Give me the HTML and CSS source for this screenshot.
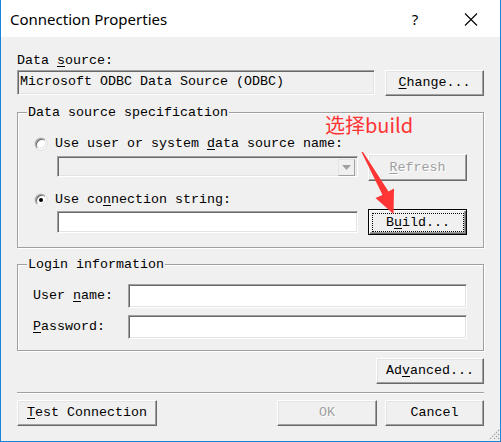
FILE: index.html
```html
<!DOCTYPE html>
<html>
<head>
<meta charset="utf-8">
<link rel="stylesheet" href="styles.css">
</head>
<body>
<div class="window">
  <div class="titlebar">
    <span class="title">Connection Properties</span>
    <span class="help">?</span>
    <span class="close"><svg width="28" height="37" viewBox="0 0 28 37"><path d="M8 13.5 L20 25.5 M20 13.5 L8 25.5" stroke="#000" stroke-width="1.1" fill="none"/></svg></span>
  </div>
  <div class="content">
    <div class="label">Data <u>s</u>ource:</div>
    <div class="ds-row">
      <div class="textbox readonly ds-box">Microsoft ODBC Data Source (ODBC)</div>
      <button class="btn w99"><u>C</u>hange...</button>
    </div>

    <div class="group spec">
      <div class="group-title">Data source specification</div>
      <div class="radio-row r1"><span class="radio"></span><span>Use user or system <u>d</u>ata source name:</span></div>
      <div class="ctrl-row c1">
        <div class="combo"><span class="combo-btn"><svg width="9" height="5" viewBox="0 0 9 5"><path d="M0 0 H9 L4.5 5 Z" fill="#a0a0a0"/></svg></span></div>
        <button class="btn w99 disabled refresh"><u>R</u>efresh</button>
      </div>
      <div class="radio-row r2"><span class="radio checked"></span><span>Use co<u>n</u>nection string:</span></div>
      <div class="ctrl-row c2">
        <div class="textbox cs-box"></div>
        <button class="btn w99 default"><span class="focus">B<u>u</u>ild...</span></button>
      </div>
    </div>

    <div class="group login">
      <div class="group-title">Login information</div>
      <div class="login-grid">
        <span class="llabel">User <u>n</u>ame:</span>
        <div class="textbox login-box"></div>
        <span class="llabel"><u>P</u>assword:</span>
        <div class="textbox login-box"></div>
      </div>
    </div>

    <button class="btn advanced">Ad<u>v</u>anced...</button>
    <div class="separator"></div>
    <div class="bottom-row">
      <button class="btn test"><u>T</u>est Connection</button>
      <button class="btn w100 disabled ok">OK</button>
      <button class="btn w99">Cancel</button>
    </div>
  </div>

  <div class="annotation">选择build</div>
  <svg class="arrow" width="40" height="66" viewBox="360 151 40 66"><polygon points="361.5,152 363,152 388.5,191.5 394,188.5 393.5,214 375.5,198 382.5,195" fill="#ff3434"/></svg>
  <svg class="grip" width="12" height="12" viewBox="0 0 12 12">
    <path d="M11 1 L1 11 M11 5 L5 11 M11 9 L9 11" stroke="#a0a0a0" stroke-width="1.2" stroke-dasharray="1.4 1.4" fill="none"/>
  </svg>
</div>
</body>
</html>
```
FILE: styles.css
```css
* { box-sizing: border-box; }
html, body { margin: 0; padding: 0; background: #f0f0f0; }
.window {
  position: relative;
  width: 501px;
  height: 442px;
  background: #f0f0f0;
  border-left: 1px solid #1883d7;
  border-right: 1px solid #1883d7;
  border-bottom: 1px solid #1883d7;
  font: 13.33px/16px "Liberation Mono", "DejaVu Sans Mono", monospace;
  color: #000;
}
.titlebar {
  height: 37px;
  background: #fff;
  display: flex;
  align-items: center;
  padding-left: 9px;
  padding-right: 15px;
}
.title {
  font: 15px/20px "Noto Sans", "Liberation Sans", sans-serif;
  color: #000;
  padding-top: 1px;
}
.help {
  margin-left: auto;
  width: 28px;
  text-align: center;
  font: 15px/20px "Noto Sans", "Liberation Sans", sans-serif;
  color: #000;
  padding-top: 1px;
}
.close { width: 28px; height: 37px; margin-left: 28px; display: block; }
.close svg { display: block; }

.content { padding: 16px 16px 0 16px; display: flex; flex-direction: column; }
.label { line-height: 16px; }
u { text-decoration: underline; text-underline-offset: 2px; }

.ds-row { display: flex; margin-top: 1px; align-items: flex-start; }
.ds-box { width: 358px; height: 25px; padding: 3px 0 0 2px; white-space: nowrap; }
.ds-row .btn { margin-left: auto; }

.textbox {
  background: #fff;
  border: 1px solid;
  border-color: #a0a0a0 #fff #fff #a0a0a0;
  box-shadow: inset 1px 1px #696969, inset -1px -1px #e3e3e3;
}
.textbox.readonly { background: #f0f0f0; }

.btn {
  height: 26px;
  background: #f0f0f0;
  border: 1px solid;
  border-color: #fff #696969 #696969 #fff;
  box-shadow: inset -1px -1px #a0a0a0, inset 1px 1px #e3e3e3;
  font: 13.33px/16px "Liberation Mono", "DejaVu Sans Mono", monospace;
  color: #000;
  padding: 0;
  text-align: center;
}
.w99 { width: 99px; }
.w100 { width: 100px; }
.btn.disabled { color: #a0a0a0; text-shadow: 1px 1px #fff; }
.btn.default {
  border: 1px solid #000;
  box-shadow: inset 1px 1px #fff, inset -1px -1px #696969, inset -2px -2px #a0a0a0;
  padding: 3px 2px 2px 3px;
}
.focus {
  display: block;
  height: 100%;
  border: 1px dotted #000;
  line-height: 18px;
}

.group {
  border: 1px solid #a0a0a0;
  box-shadow: inset 1px 1px #fff, 1px 1px #fff;
}
.group-title {
  margin: -8px 0 0 9px;
  padding: 0 1px;
  background: #f0f0f0;
  line-height: 16px;
  align-self: flex-start;
  width: max-content;
}
.spec { margin-top: 16px; padding-bottom: 12px; }

.radio-row { display: flex; align-items: center; padding-left: 17px; gap: 8px; height: 16px; }
.r1 { margin-top: 15px; }
.r2 { margin-top: 11px; }
.radio {
  width: 12px; height: 12px;
  border-radius: 50%;
  background: #fff;
  border: 1px solid;
  border-color: #a0a0a0 #fff #fff #a0a0a0;
  box-shadow: inset 1px 1px #696969, inset -1px -1px #e3e3e3, 0 0 0 0.5px #c8c8c8;
  display: flex; align-items: center; justify-content: center;
}
.radio.checked::after {
  content: "";
  width: 4px; height: 4px;
  border-radius: 50%;
  background: #000;
}

.ctrl-row { display: flex; align-items: flex-start; padding-left: 39px; gap: 10px; }
.c1 { margin-top: 2px; }
.c1 .refresh { height: 27px; }
.combo {
  width: 301px; height: 21px; margin-top: 2px;
  background: #f0f0f0;
  border: 1px solid;
  border-color: #a0a0a0 #fff #fff #a0a0a0;
  box-shadow: inset 1px 1px #696969, inset -1px -1px #e3e3e3;
  display: flex; justify-content: flex-end; padding: 2px;
}
.combo-btn {
  width: 17px; height: 17px;
  border: 1px solid;
  border-color: #e3e3e3 #a0a0a0 #a0a0a0 #e3e3e3;
  background: #f0f0f0;
  display: flex; align-items: center; justify-content: center;
}
.combo-btn svg { display: block; }
.c2 { margin-top: 1px; }
.cs-box { width: 301px; height: 22px; margin-top: 2px; }

.login { margin-top: 16px; padding-bottom: 11px; }
.login-grid {
  margin-top: 11px;
  display: grid;
  grid-template-columns: 95px 339px;
  grid-auto-rows: 24px;
  row-gap: 7px;
  padding-left: 15px;
  align-items: center;
}
.login-box { height: 24px; }

.advanced { width: 108px; margin-top: 7px; align-self: flex-end; }
.separator { margin-top: 8px; border-top: 1px solid #a0a0a0; border-bottom: 1px solid #fff; }
.bottom-row { margin-top: 6px; display: flex; gap: 8px; }
.test { width: 140px; margin-right: auto; }

.annotation {
  position: absolute;
  left: 324px;
  top: 113px;
  font: 20px/24px "Noto Sans CJK SC", "Noto Sans", sans-serif;
  color: #ff3434;
  white-space: nowrap;
}
.arrow { position: absolute; left: 359px; top: 151px; }
.grip { position: absolute; right: 0; bottom: 0; }
```
